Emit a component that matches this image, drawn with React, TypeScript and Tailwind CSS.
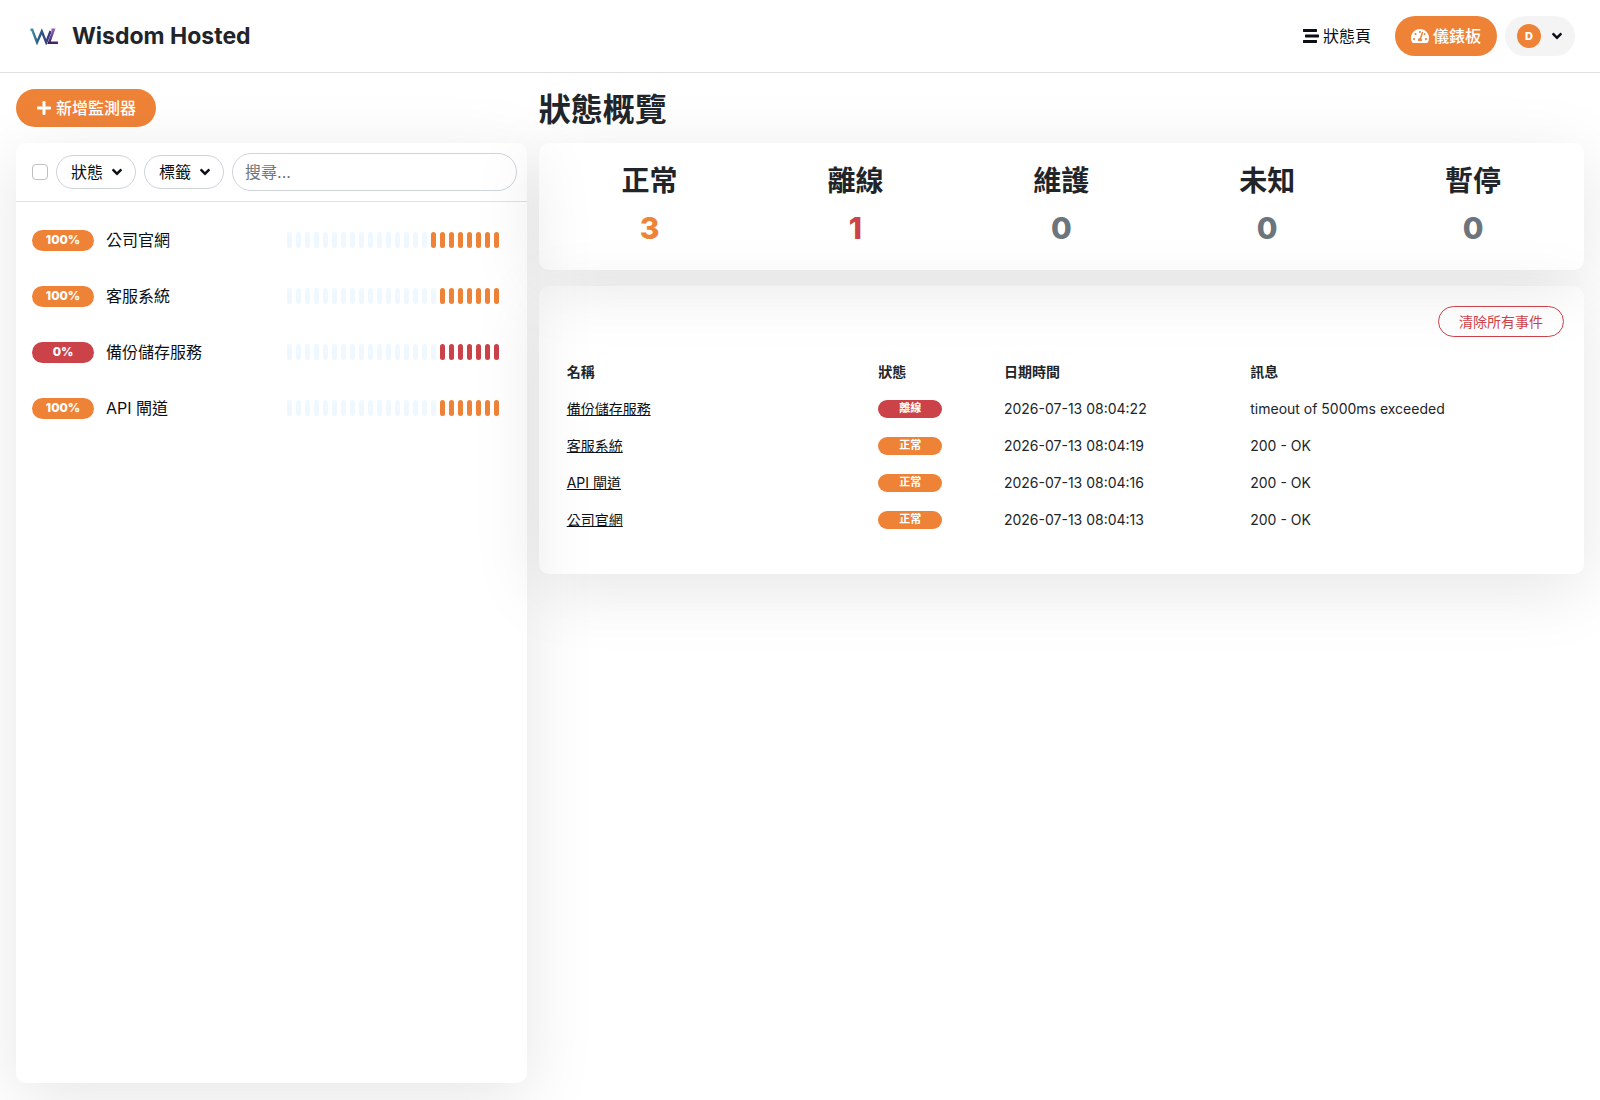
import { ReactElement } from 'react'
import { FaAngleDown, FaPlus, FaStream, FaTachometerAlt } from 'react-icons/fa'

type Monitor = {
    name: string
    uptime: string
    up: boolean
    beats: number
}

type Event = {
    name: string
    up: boolean
    time: string
    message: string
}

const BAR_COUNT = 24

const monitors: Monitor[] = [
    { name: '公司官網', uptime: '100%', up: true, beats: 8 },
    { name: '客服系統', uptime: '100%', up: true, beats: 7 },
    { name: '備份儲存服務', uptime: '0%', up: false, beats: 7 },
    { name: 'API 閘道', uptime: '100%', up: true, beats: 7 },
]

const stats = [
    { label: '正常', value: 3, color: 'text-[#ee8338]' },
    { label: '離線', value: 1, color: 'text-[#cb4249]' },
    { label: '維護', value: 0, color: 'text-[#6c757d]' },
    { label: '未知', value: 0, color: 'text-[#6c757d]' },
    { label: '暫停', value: 0, color: 'text-[#6c757d]' },
]

const events: Event[] = [
    { name: '備份儲存服務', up: false, time: '2026-07-13 08:04:22', message: 'timeout of 5000ms exceeded' },
    { name: '客服系統', up: true, time: '2026-07-13 08:04:19', message: '200 - OK' },
    { name: 'API 閘道', up: true, time: '2026-07-13 08:04:16', message: '200 - OK' },
    { name: '公司官網', up: true, time: '2026-07-13 08:04:13', message: '200 - OK' },
]

const Logo = (): ReactElement => (
    <svg viewBox="0 0 28 17" className="h-[17px] w-7" fill="none" strokeWidth="2.4" aria-hidden="true">
        <defs>
            <linearGradient id="logo-w" x1="0" y1="0" x2="20" y2="0" gradientUnits="userSpaceOnUse">
                <stop offset="0" stopColor="#45a0a4" />
                <stop offset="0.4" stopColor="#2d5f8c" />
                <stop offset="1" stopColor="#3a3578" />
            </linearGradient>
            <linearGradient id="logo-l" x1="24" y1="1" x2="20" y2="16" gradientUnits="userSpaceOnUse">
                <stop offset="0" stopColor="#9463bd" />
                <stop offset="1" stopColor="#341d5e" />
            </linearGradient>
        </defs>
        <path d="M.4 1.8h1.8l4.8 12.6L11.8 3.4l4.4 11L20.6 3" stroke="url(#logo-w)" />
        <path d="M21.4 1.8h2.4L19 14.8h9" stroke="url(#logo-l)" />
    </svg>
)

const Header = (): ReactElement => (
    <header className="flex items-center justify-between border-b border-[#dee2e6] py-4 pr-[25px] pl-[30px]">
        <a href="#" className="flex items-center gap-[14px]">
            <Logo />
            <span className="text-[23px] font-bold text-[#212529]">Wisdom Hosted</span>
        </a>
        <nav className="flex items-center gap-2">
            <a href="#status" className="flex h-10 items-center gap-1 px-4 text-[#0b0f14]">
                <FaStream />
                狀態頁
            </a>
            <a
                href="#dashboard"
                className="flex h-10 items-center gap-1 rounded-full bg-[#ee8338] px-4 font-medium text-white"
            >
                <FaTachometerAlt className="h-[18px] w-[18px]" />
                儀錶板
            </a>
            <button
                type="button"
                aria-label="D"
                className="flex h-10 items-center gap-2 rounded-full bg-[#f4f4f4] pr-[10px] pl-3 text-[#0b0f14]"
            >
                <span className="flex h-6 w-6 items-center justify-center rounded-full bg-[#ee8338] text-[11px] font-extrabold text-white">
                    D
                </span>
                <FaAngleDown />
            </button>
        </nav>
    </header>
)

const FilterButton = ({ label }: { label: string }): ReactElement => (
    <button
        type="button"
        className="flex h-[34px] shrink-0 items-center gap-[6px] rounded-full border border-[#ced4da] pr-[10px] pl-[14px] text-[#0b0f14]"
    >
        {label}
        <FaAngleDown />
    </button>
)

const MonitorRow = ({ monitor }: { monitor: Monitor }): ReactElement => {
    const color = monitor.up ? 'bg-[#ee8338]' : 'bg-[#cb4249]'
    return (
        <a href="#monitor" className="flex h-14 items-center pr-7 pl-4 text-[#0b0f14]">
            <span
                className={`${color} mr-3 flex h-[21px] w-[62px] items-center justify-center rounded-full text-xs font-extrabold text-white`}
            >
                {monitor.uptime}
            </span>
            <span className="flex-1">{monitor.name}</span>
            <span className="flex gap-1">
                {Array.from({ length: BAR_COUNT }, (_, i) => (
                    <span
                        key={i}
                        className={`h-4 w-[5px] rounded-full ${i < BAR_COUNT - monitor.beats ? 'bg-[#f0f8ff]' : color}`}
                    />
                ))}
            </span>
        </a>
    )
}

const MonitorList = (): ReactElement => (
    <div className="h-[calc(100vh-160px)] overflow-hidden rounded-[10px] shadow-[0_15px_70px_rgba(0,0,0,0.1)]">
        <div className="flex items-center gap-2 border-b border-[#dee2e6] py-[10px] pr-[10px] pl-4">
            <input
                type="checkbox"
                aria-label="全選"
                className="h-4 w-4 shrink-0 appearance-none rounded-sm border border-[#bfbfbf]"
            />
            <FilterButton label="狀態" />
            <FilterButton label="標籤" />
            <input
                type="text"
                aria-label="搜尋"
                placeholder="搜尋..."
                className="h-[38px] min-w-0 flex-1 rounded-full border border-[#ced4da] px-3 placeholder:text-[#6c757d]"
            />
        </div>
        <div className="pt-[10px]">
            {monitors.map((monitor) => (
                <MonitorRow key={monitor.name} monitor={monitor} />
            ))}
        </div>
    </div>
)

const Stats = (): ReactElement => (
    <div className="mb-4 rounded-[10px] px-2 py-5 text-center shadow-[0_15px_70px_rgba(0,0,0,0.1)]">
        <div className="flex">
            {stats.map((stat) => (
                <div key={stat.label} className="flex-1">
                    <h3 className="mb-2 text-[28px] leading-[36px] font-semibold">{stat.label}</h3>
                    <span className={`${stat.color} block text-[30px] leading-[43px] font-extrabold`}>
                        {stat.value}
                    </span>
                </div>
            ))}
        </div>
    </div>
)

const EventTable = (): ReactElement => (
    <div className="rounded-[10px] px-5 pt-5 pb-9 shadow-[0_15px_70px_rgba(0,0,0,0.1)]">
        <div className="mb-4 flex justify-end">
            <button
                type="button"
                className="rounded-full border border-[#cb4249] px-5 py-1 text-sm leading-[21px] text-[#cb4249]"
            >
                清除所有事件
            </button>
        </div>
        <table className="w-full table-fixed text-left text-sm leading-[21px]">
            <thead>
                <tr>
                    <th className="w-[31%] p-2 font-bold">名稱</th>
                    <th className="w-[12.5%] p-2 font-bold">狀態</th>
                    <th className="w-[24.5%] p-2 font-bold">日期時間</th>
                    <th className="p-2 font-bold">訊息</th>
                </tr>
            </thead>
            <tbody>
                {events.map((event) => (
                    <tr key={event.time}>
                        <td className="p-2">
                            <a href="#monitor" className="text-[#0b0f14] underline">
                                {event.name}
                            </a>
                        </td>
                        <td className="p-2">
                            <span
                                className={`${event.up ? 'bg-[#ee8338]' : 'bg-[#cb4249]'} flex h-[18px] w-16 items-center justify-center rounded-full text-[11px] font-bold text-white`}
                            >
                                {event.up ? '正常' : '離線'}
                            </span>
                        </td>
                        <td className="p-2">{event.time}</td>
                        <td className="p-2">{event.message}</td>
                    </tr>
                ))}
            </tbody>
        </table>
    </div>
)

const App = (): ReactElement => {
    return (
        <div
            lang="zh-Hant"
            className="min-h-screen overflow-hidden bg-white font-['Inter','Noto_Sans_CJK_TC',sans-serif] text-base text-[#212529]"
        >
            <Header />
            <main className="flex px-4 pt-4">
                <div className="w-1/3 pr-3">
                    <button
                        type="button"
                        className="mb-4 flex h-[38px] items-center gap-1 rounded-full bg-[#ee8338] px-5 font-medium text-white"
                    >
                        <FaPlus />
                        新增監測器
                    </button>
                    <MonitorList />
                </div>
                <div className="w-2/3">
                    <h1 className="mb-3 text-[32px] leading-[42px] font-semibold">狀態概覽</h1>
                    <Stats />
                    <EventTable />
                </div>
            </main>
        </div>
    )
}

export default App
